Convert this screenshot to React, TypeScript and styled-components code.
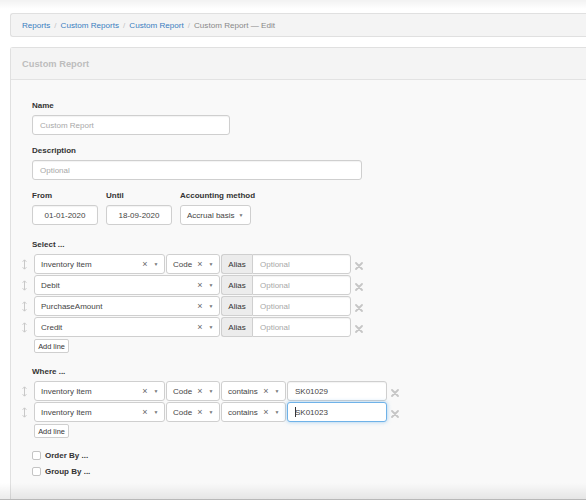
import React from 'react'
import styled, { createGlobalStyle } from 'styled-components'

const GlobalStyle = createGlobalStyle`
    html, body {
        margin: 0;
        padding: 0;
        background: #fff;
        font-family: "Liberation Sans", Arial, Helvetica, sans-serif;
        color: #333;
    }
`;

const Page = styled.div`
    position: relative;
    height: 500px;
    overflow: hidden;
    padding: 13px 0 0 10px;
    box-sizing: border-box;

    &::before {
        content: '';
        position: absolute;
        left: 0;
        right: 0;
        top: 0;
        height: 9px;
        background: linear-gradient(rgba(0, 0, 0, 0.05), rgba(0, 0, 0, 0));
        pointer-events: none;
    }

    &::after {
        content: '';
        position: absolute;
        left: 0;
        right: 0;
        bottom: 0;
        height: 16px;
        background: linear-gradient(rgba(0, 0, 0, 0), rgba(0, 0, 0, 0.08));
        border-bottom: 1px solid #b8b8b8;
        pointer-events: none;
    }
`;

const Breadcrumb = styled.ol`
    list-style: none;
    margin: 0 -10px 0 0;
    height: 24px;
    padding: 0 11px;
    display: flex;
    align-items: center;
    background: #f4f4f4;
    border: 1px solid #e0e0e0;
    border-right: none;
    border-radius: 3px 0 0 3px;
    box-sizing: border-box;
    font-size: 8.1px;

    li + li::before {
        content: '/';
        color: #c4c4c4;
        padding: 0 4px;
    }
`;

const Crumb = styled.li<{ active?: boolean }>`
    color: ${props => props.active ? '#888' : '#3a7ebf'};
`;

const Panel = styled.section`
    margin: 10px -10px 0 0;
    border: 1px solid #e0e0e0;
    border-right: none;
    border-radius: 3px 0 0 0;
    background: #f9f9f9;
`;

const PanelHeading = styled.div`
    height: 31px;
    display: flex;
    align-items: center;
    padding: 0 11px;
    background: #f4f4f4;
    border-bottom: 1px solid #e2e2e2;
    color: #bdbdbd;
    font-weight: bold;
    font-size: 9.3px;
`;

const PanelBody = styled.div`
    padding: 21px 21px 30px;
`;

const Group = styled.div<{ gap?: number }>`
    margin-bottom: ${props => props.gap ?? 11}px;
`;

const Label = styled.div`
    font-weight: bold;
    font-size: 8px;
    line-height: 10px;
    color: #333;
    margin-bottom: 4px;
`;

const TextInput = styled.div<{ width: number; center?: boolean; focused?: boolean; placeholder?: boolean }>`
    width: ${props => props.width}px;
    height: 20px;
    box-sizing: border-box;
    display: flex;
    align-items: center;
    justify-content: ${props => props.center ? 'center' : 'flex-start'};
    padding: 0 7px;
    background: #fff;
    border: 1px solid ${props => props.focused ? '#6fb2e8' : '#cfcfcf'};
    border-radius: 3px;
    box-shadow: ${props => props.focused ? '0 0 4px rgba(102, 175, 233, 0.6)' : 'inset 0 1px 1px rgba(0,0,0,0.05)'};
    font-size: 8px;
    color: ${props => props.placeholder ? '#a8a8a8' : '#444'};
    white-space: nowrap;
`;

const Cursor = styled.span`
    display: inline-block;
    width: 1px;
    height: 10px;
    margin-right: -1px;
    background: #333;
`;

const DateRow = styled.div`
    display: flex;
    gap: 8px;
`;

const NativeSelect = styled.div`
    width: 71px;
    height: 20px;
    box-sizing: border-box;
    display: flex;
    align-items: center;
    padding: 0 4px 0 6px;
    background: #fff;
    border: 1px solid #cfcfcf;
    border-radius: 3px;
    font-size: 8px;
    color: #444;

    span { flex: 1; }
`;

const Arrow = styled.span`
    width: 10px;
    font-size: 5px;
    color: #777;
    text-align: center;
    flex: none !important;
`;

const Rows = styled.div`
    display: flex;
    flex-direction: column;
    gap: 1px;
    margin-left: -14px;
`;

const Row = styled.div`
    display: flex;
    align-items: center;
    gap: 1px;
`;

const Handle = styled.div`
    width: 12px;
    margin-right: 3px;
    display: flex;
    justify-content: center;
`;

const Select = styled.div<{ width: number }>`
    width: ${props => props.width}px;
    height: 20px;
    box-sizing: border-box;
    display: flex;
    align-items: center;
    padding: 0 3px 0 6px;
    background: #fff;
    border: 1px solid #cfcfcf;
    border-radius: 3px;
    font-size: 8px;
    color: #444;
    white-space: nowrap;
`;

const SelectValue = styled.span`
    flex: 1;
`;

const Clear = styled.span`
    width: 12px;
    text-align: center;
    font-size: 9px;
    color: #666;
`;

const InputGroup = styled.div`
    display: flex;
`;

const Addon = styled.div`
    width: 31px;
    height: 20px;
    box-sizing: border-box;
    display: flex;
    align-items: center;
    justify-content: center;
    background: #ececec;
    border: 1px solid #cfcfcf;
    border-right: none;
    border-radius: 3px 0 0 3px;
    font-size: 8px;
    color: #333;
`;

const AddonInput = styled(TextInput)`
    border-radius: 0 3px 3px 0;
`;

const Remove = styled.div`
    margin-left: 3px;
    margin-top: 4px;
    display: flex;
`;

const SmallButton = styled.button`
    display: block;
    margin: 2px 0 0 2px;
    width: 35px;
    height: 14px;
    padding: 0;
    border: 1px solid #cfcfcf;
    border-radius: 2px;
    background: #fff;
    font-family: inherit;
    font-size: 7.4px;
    color: #333;
`;

const CheckRow = styled.label`
    display: flex;
    align-items: center;
    gap: 4px;
    height: 16px;
    font-weight: bold;
    font-size: 8px;
    color: #333;
`;

const CheckBox = styled.span`
    width: 9px;
    height: 9px;
    box-sizing: border-box;
    border: 1px solid #c4c4c4;
    border-radius: 2px;
    background: #fff;
`;

const DragIcon = () => (
    <svg width="5" height="11" viewBox="0 0 5 11">
        <path d="M2.5 1v9M0.6 2.8L2.5 0.8L4.4 2.8M0.6 8.2L2.5 10.2L4.4 8.2" stroke="#c8c8c8" strokeWidth="1" fill="none" />
    </svg>
);

const RemoveIcon = () => (
    <svg width="8" height="8" viewBox="0 0 8 8">
        <path d="M1 1L7 7M7 1L1 7" stroke="#c6c6c6" strokeWidth="1.8" strokeLinecap="round" />
    </svg>
);

interface SelectBoxProps {
    width: number;
    value: string;
}

const SelectBox: React.FC<SelectBoxProps> = ({ width, value }) => (
    <Select width={width}>
        <SelectValue>{value}</SelectValue>
        <Clear>×</Clear>
        <Arrow>▼</Arrow>
    </Select>
);

const selectLines = [
    { field: 'Inventory Item', sub: 'Code' },
    { field: 'Debit' },
    { field: 'PurchaseAmount' },
    { field: 'Credit' },
];

const whereLines = [
    { value: 'SK01029', focused: false },
    { value: 'SK01023', focused: true },
];

export default function App() {
    return (
        <>
            <GlobalStyle />
            <Page>
                <Breadcrumb>
                    <Crumb>Reports</Crumb>
                    <Crumb>Custom Reports</Crumb>
                    <Crumb>Custom Report</Crumb>
                    <Crumb active>Custom Report — Edit</Crumb>
                </Breadcrumb>

                <Panel>
                    <PanelHeading>Custom Report</PanelHeading>
                    <PanelBody>
                        <Group>
                            <Label>Name</Label>
                            <TextInput width={198} placeholder>Custom Report</TextInput>
                        </Group>

                        <Group>
                            <Label>Description</Label>
                            <TextInput width={330} placeholder>Optional</TextInput>
                        </Group>

                        <DateRow>
                            <Group gap={15}>
                                <Label>From</Label>
                                <TextInput width={66} center>01-01-2020</TextInput>
                            </Group>
                            <Group gap={15}>
                                <Label>Until</Label>
                                <TextInput width={66} center>18-09-2020</TextInput>
                            </Group>
                            <Group gap={15}>
                                <Label>Accounting method</Label>
                                <NativeSelect>
                                    <span>Accrual basis</span>
                                    <Arrow>▼</Arrow>
                                </NativeSelect>
                            </Group>
                        </DateRow>

                        <Group gap={14}>
                            <Label>Select ...</Label>
                            <Rows>
                                {selectLines.map(line => (
                                    <Row key={line.field}>
                                        <Handle><DragIcon /></Handle>
                                        {line.sub ? (
                                            <>
                                                <SelectBox width={131} value={line.field} />
                                                <SelectBox width={54} value={line.sub} />
                                            </>
                                        ) : (
                                            <SelectBox width={186} value={line.field} />
                                        )}
                                        <InputGroup>
                                            <Addon>Alias</Addon>
                                            <AddonInput width={99} placeholder>Optional</AddonInput>
                                        </InputGroup>
                                        <Remove><RemoveIcon /></Remove>
                                    </Row>
                                ))}
                            </Rows>
                            <SmallButton>Add line</SmallButton>
                        </Group>

                        <Group gap={9}>
                            <Label>Where ...</Label>
                            <Rows>
                                {whereLines.map(line => (
                                    <Row key={line.value}>
                                        <Handle><DragIcon /></Handle>
                                        <SelectBox width={131} value="Inventory Item" />
                                        <SelectBox width={54} value="Code" />
                                        <SelectBox width={65} value="contains" />
                                        <TextInput width={100} focused={line.focused}>
                                            {line.focused && <Cursor />}
                                            {line.value}
                                        </TextInput>
                                        <Remove><RemoveIcon /></Remove>
                                    </Row>
                                ))}
                            </Rows>
                            <SmallButton>Add line</SmallButton>
                        </Group>

                        <CheckRow><CheckBox />Order By ...</CheckRow>
                        <CheckRow><CheckBox />Group By ...</CheckRow>
                    </PanelBody>
                </Panel>
            </Page>
        </>
    );
}
